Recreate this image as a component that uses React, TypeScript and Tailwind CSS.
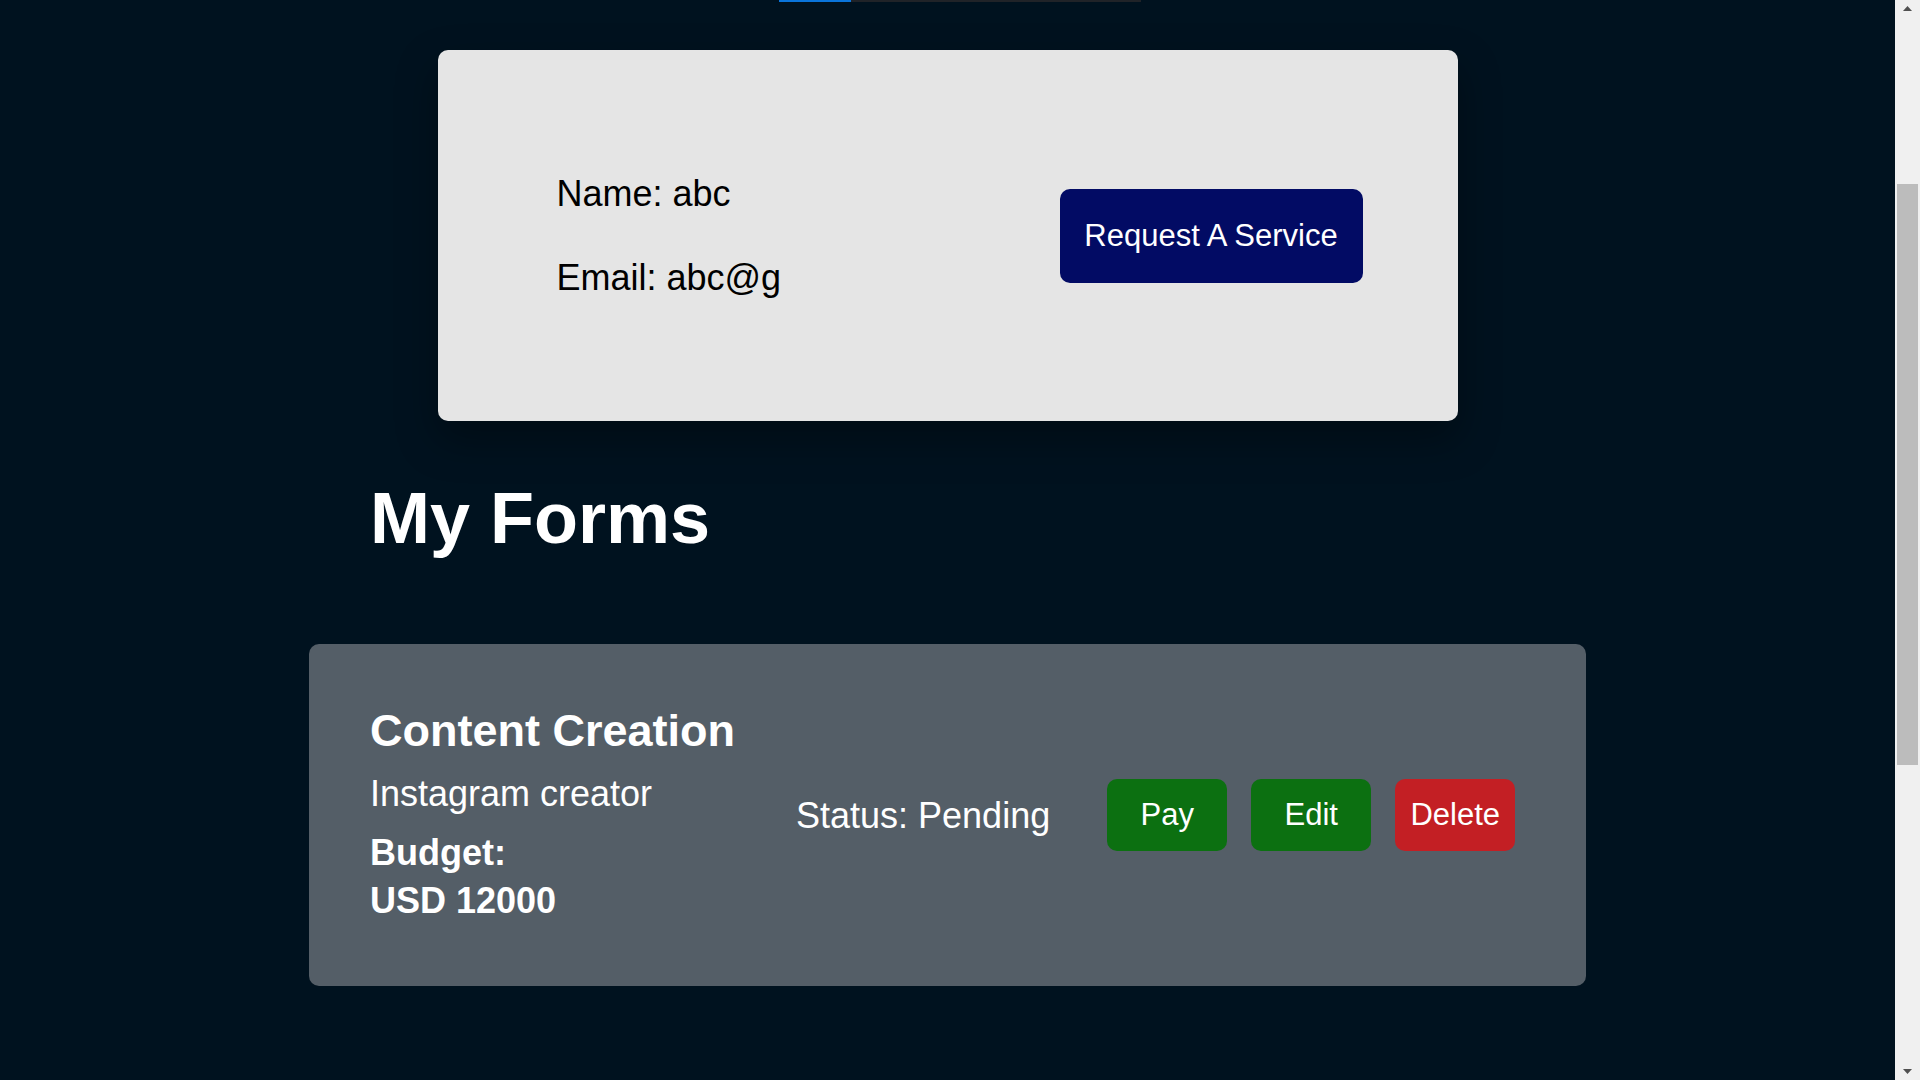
import React from "react";

// fake browser scrollbar on the right edge
const ScrollBar = () => {
  return (
    <div className="w-[25px] h-screen bg-[#f0f0f0] flex flex-col shrink-0">
      <div className="h-[17px] flex items-center justify-center">
        <svg width="9" height="5" viewBox="0 0 9 5">
          <path d="M0 5 L4.5 0 L9 5 Z" fill="#505050" />
        </svg>
      </div>
      <div className="flex-1 px-[2px]">
        <div className="mt-[167px] h-[581px] bg-[#bcbcbc]" />
      </div>
      <div className="h-[17px] flex items-center justify-center">
        <svg width="9" height="5" viewBox="0 0 9 5">
          <path d="M0 0 L9 0 L4.5 5 Z" fill="#505050" />
        </svg>
      </div>
    </div>
  );
};

type Form = {
  id: number;
  service: string;
  description: string;
  budget: string;
  status: string;
};

const forms: Form[] = [
  {
    id: 1,
    service: "Content Creation",
    description: "Instagram creator",
    budget: "USD 12000",
    status: "Pending",
  },
];

const App = () => {
  return (
    <div className="min-h-screen bg-[#00121f] flex font-['Liberation_Sans',Arial,sans-serif]">
      <main className="flex-1 flex flex-col items-center h-screen overflow-hidden">
        {/* sisa tab bar di atas */}
        <div className="self-start ml-[779px] flex h-[2px]">
          <div className="w-[72px] bg-[#0a74da]" />
          <div className="w-[290px] bg-[#202328]" />
        </div>

        {/* Profil user */}
        <div className="mt-[48px] w-[1020px] h-[371px] shrink-0 rounded-[10px] bg-[#e5e5e5] flex items-center justify-between pl-[119px] pr-[95px] shadow-[0_18px_40px_rgba(0,0,0,0.35)]">
          <div className="flex flex-col gap-[43px] text-black text-[36px] leading-[41px]">
            <p>Name: abc</p>
            <p>Email: abc@g</p>
          </div>
          <button className="w-[303px] h-[94px] rounded-[10px] bg-[#020b64] text-white text-[31px] leading-[34px] whitespace-nowrap">
            Request A Service
          </button>
        </div>

        <div className="w-[1277px] shrink-0">
          <h1 className="mt-[57px] pl-[61px] text-white text-[72px] font-bold leading-[80px]">
            My Forms
          </h1>

          {/* List form */}
          {forms.map((form) => (
            <div
              key={form.id}
              className="mt-[86px] h-[342px] rounded-[10px] bg-[#545e67] flex items-center pl-[61px] pr-[72px] text-white">
              <div className="w-[426px] shrink-0 flex flex-col">
                <h2 className="text-[45px] font-bold leading-[52px]">{form.service}</h2>
                <p className="mt-[16px] text-[36px] leading-[41px]">{form.description}</p>
                <p className="mt-[15px] text-[36px] font-bold leading-[48px]">
                  Budget:
                  <br />
                  {form.budget}
                </p>
              </div>
              <p className="shrink-0 whitespace-nowrap text-[36px] leading-[41px]">
                Status: {form.status}
              </p>
              <div className="ml-[57px] shrink-0 flex gap-[24px]">
                <button className="w-[120px] h-[72px] rounded-[10px] bg-[#0c7011] text-[31px] text-white">
                  Pay
                </button>
                <button className="w-[120px] h-[72px] rounded-[10px] bg-[#0c7011] text-[31px] text-white">
                  Edit
                </button>
                <button className="w-[120px] h-[72px] rounded-[10px] bg-[#c31f24] text-[31px] text-white">
                  Delete
                </button>
              </div>
            </div>
          ))}
        </div>
      </main>
      <ScrollBar />
    </div>
  );
};

export default App;
